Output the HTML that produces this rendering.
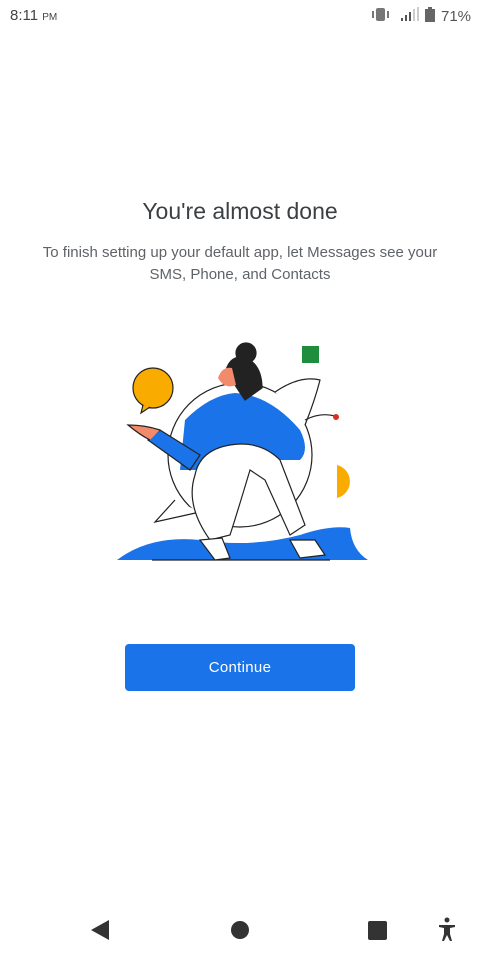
<!DOCTYPE html>
<html><head><meta charset="utf-8"><style>
body{margin:0;width:480px;height:960px;background:#fff;font-family:"Liberation Sans",sans-serif;position:relative;overflow:hidden}
.sb{position:absolute;top:7px;left:10px;font-size:15px;color:#444}
.sb small{font-size:10px}
h1{position:absolute;top:198px;left:0;width:480px;text-align:center;font-weight:normal;font-size:23px;color:#3c4043;margin:0}
p{position:absolute;top:242px;left:28px;width:424px;text-align:center;font-size:15px;line-height:22px;color:#5f6368;margin:0}
.btn{position:absolute;left:125px;top:644px;width:230px;height:47px;background:#1a73e8;border-radius:4px;color:#fff;font-size:15px;text-align:center;line-height:47px;letter-spacing:0.3px}
</style></head><body>
<div class="sb">8:11 <small>PM</small></div>
<svg style="position:absolute;left:360px;top:0" width="120" height="32">
<rect x="16" y="8" width="9" height="13" rx="2" fill="#777"/><rect x="12" y="11" width="2" height="7" fill="#777"/><rect x="27" y="11" width="2" height="7" fill="#777"/>
<rect x="41" y="18" width="2" height="3" fill="#555"/><rect x="45" y="15" width="2" height="6" fill="#555"/><rect x="49" y="12" width="2" height="9" fill="#555"/><rect x="53" y="9" width="2" height="12" fill="#ccc"/><rect x="57" y="7" width="2" height="14" fill="#ccc"/>
<rect x="65" y="9" width="10" height="13" fill="#666"/><rect x="68" y="7" width="4" height="2" fill="#666"/>
<text x="81" y="21" font-size="15" fill="#555" font-family="Liberation Sans">71%</text></svg>
<h1>You're almost done</h1>
<p>To finish setting up your default app, let Messages see your SMS, Phone, and Contacts</p>
<svg style="position:absolute;left:0;top:0" width="480" height="960" fill="none" stroke="#222" stroke-width="1.2">
<path d="M117 560 Q150 535 200 540 Q250 548 300 535 Q330 525 350 528 Q352 550 368 560 Z" fill="#1a73e8" stroke="none"/>
<line x1="152" y1="560" x2="330" y2="560"/>
<circle cx="240" cy="455" r="72" fill="#fff"/>
<path d="M275 392 Q300 375 320 380 Q315 400 305 425" fill="#fff"/>
<path d="M175 500 L155 522 L200 512" fill="#fff"/>
<path d="M305 420 Q320 412 335 416"/>
<circle cx="336" cy="417" r="3" fill="#d93025" stroke="none"/>
<rect x="302" y="346" width="17" height="17" fill="#1e8e3e" stroke="none"/>
<path d="M337 465 A17 17 0 0 1 337 498 Z" fill="#f9ab00" stroke="none"/>
<circle cx="153" cy="388" r="20" fill="#f9ab00"/>
<path d="M143 405 L141 413 L150 407" fill="#f9ab00"/>
<path d="M185 420 Q210 395 235 393 Q270 395 300 430 Q310 450 300 460 L255 460 L195 470 L180 470 Z" fill="#1a73e8" stroke="none"/>
<path d="M148 440 L190 470 L200 455 L160 430 Z" fill="#1a73e8"/>
<path d="M160 430 Q145 425 128 425 Q140 435 150 440" fill="#f28b6b"/>
<path d="M195 475 Q200 450 230 445 Q260 440 280 460 L305 525 L290 535 L265 480 L250 470 Q235 520 230 535 L210 540 Q185 505 195 475 Z" fill="#fff"/>
<path d="M200 540 L215 560 L230 558 L222 538 Z" fill="#fff"/>
<path d="M290 540 L300 558 L325 555 L315 540 Z" fill="#fff"/>
<path d="M225 375 Q228 355 245 357 Q262 365 262 388 L245 400 Q238 390 235 385 Q222 385 225 375 Z" fill="#222"/>
<circle cx="246" cy="353" r="10" fill="#222"/>
<path d="M218 378 Q222 366 232 368 L236 385 Q225 390 218 378 Z" fill="#f28b6b" stroke="none"/>
</svg>
<div class="btn">Continue</div>
<svg style="position:absolute;left:0;top:910px" width="480" height="40">
<path d="M91 20 L109 10 L109 30 Z" fill="#333"/>
<circle cx="240" cy="20" r="9" fill="#333"/>
<rect x="368" y="11" width="19" height="19" rx="2" fill="#333"/>
<circle cx="447" cy="10" r="2.5" fill="#333"/>
<path d="M439 15 L455 15 L455 17 L450 18 L450 24 L452 31 L450 31 L447 25 L444 31 L442 31 L444 24 L444 18 L439 17 Z" fill="#333"/>
</svg>
</body></html>
